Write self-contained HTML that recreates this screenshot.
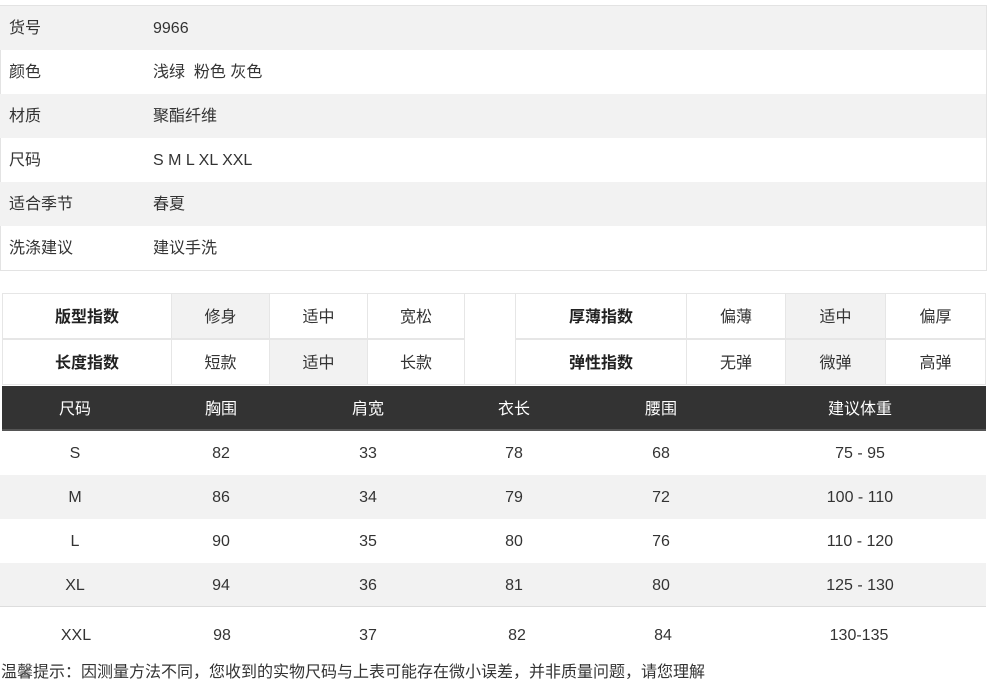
<!DOCTYPE html>
<html><head><meta charset="utf-8"><style>
*{margin:0;padding:0;box-sizing:border-box}
body{width:989px;height:685px;background:#fff;font-family:"Liberation Sans","Noto Sans CJK SC",sans-serif;font-size:16px;color:#333;position:relative;overflow:hidden}
.a{position:absolute}
.r{position:absolute;left:0;width:986px;height:44px;line-height:46px}
.g{background:#f2f2f2}
.c{position:absolute;text-align:center;border:1px solid #e6e6e6;height:46px;line-height:47px}
.b{font-weight:bold;color:#222}
.t{position:absolute;text-align:center;width:120px;margin-left:-60px}
</style></head><body>
<div class="a" style="left:0;top:5px;width:987px;height:266px;border:1px solid #e3e3e3"></div>
<div class="r g" style="top:6px"><span class="a" style="left:9px">货号</span><span class="a" style="left:153px">9966</span></div>
<div class="r" style="top:50px"><span class="a" style="left:9px">颜色</span><span class="a" style="left:153px">浅绿&nbsp; 粉色 灰色</span></div>
<div class="r g" style="top:94px"><span class="a" style="left:9px">材质</span><span class="a" style="left:153px">聚酯纤维</span></div>
<div class="r" style="top:138px"><span class="a" style="left:9px">尺码</span><span class="a" style="left:153px">S M L XL XXL</span></div>
<div class="r g" style="top:182px"><span class="a" style="left:9px">适合季节</span><span class="a" style="left:153px">春夏</span></div>
<div class="r" style="top:226px"><span class="a" style="left:9px">洗涤建议</span><span class="a" style="left:153px">建议手洗</span></div>

<div class="c b" style="left:2px;top:293px;width:170px">版型指数</div>
<div class="c g" style="left:171px;top:293px;width:99px">修身</div>
<div class="c" style="left:269px;top:293px;width:99px">适中</div>
<div class="c" style="left:367px;top:293px;width:98px">宽松</div>
<div class="c b" style="left:2px;top:339px;width:170px">长度指数</div>
<div class="c" style="left:171px;top:339px;width:99px">短款</div>
<div class="c g" style="left:269px;top:339px;width:99px">适中</div>
<div class="c" style="left:367px;top:339px;width:98px">长款</div>
<div class="c" style="left:464px;top:293px;width:52px;height:92px"></div>
<div class="c b" style="left:515px;top:293px;width:172px">厚薄指数</div>
<div class="c" style="left:686px;top:293px;width:100px">偏薄</div>
<div class="c g" style="left:785px;top:293px;width:101px">适中</div>
<div class="c" style="left:885px;top:293px;width:101px">偏厚</div>
<div class="c b" style="left:515px;top:339px;width:172px">弹性指数</div>
<div class="c" style="left:686px;top:339px;width:100px">无弹</div>
<div class="c g" style="left:785px;top:339px;width:101px">微弹</div>
<div class="c" style="left:885px;top:339px;width:101px">高弹</div>

<div class="r" style="top:386px;height:45px;line-height:47px;left:2px;width:984px;background:#333;color:#fff;border-bottom:2px solid #555">
<span class="t" style="left:73px">尺码</span><span class="t" style="left:219px">胸围</span><span class="t" style="left:366px">肩宽</span><span class="t" style="left:512px">衣长</span><span class="t" style="left:659px">腰围</span><span class="t" style="left:858px">建议体重</span></div>
<div class="r" style="top:431px"><span class="t" style="left:75px">S</span><span class="t" style="left:221px">82</span><span class="t" style="left:368px">33</span><span class="t" style="left:514px">78</span><span class="t" style="left:661px">68</span><span class="t" style="left:860px">75 - 95</span></div>
<div class="r g" style="top:475px"><span class="t" style="left:75px">M</span><span class="t" style="left:221px">86</span><span class="t" style="left:368px">34</span><span class="t" style="left:514px">79</span><span class="t" style="left:661px">72</span><span class="t" style="left:860px">100 - 110</span></div>
<div class="r" style="top:519px"><span class="t" style="left:75px">L</span><span class="t" style="left:221px">90</span><span class="t" style="left:368px">35</span><span class="t" style="left:514px">80</span><span class="t" style="left:661px">76</span><span class="t" style="left:860px">110 - 120</span></div>
<div class="r g" style="top:563px;border-bottom:1px solid #ddd"><span class="t" style="left:75px">XL</span><span class="t" style="left:221px">94</span><span class="t" style="left:368px">36</span><span class="t" style="left:514px">81</span><span class="t" style="left:661px">80</span><span class="t" style="left:860px">125 - 130</span></div>
<div class="r" style="top:613px"><span class="t" style="left:76px">XXL</span><span class="t" style="left:222px">98</span><span class="t" style="left:368px">37</span><span class="t" style="left:517px">82</span><span class="t" style="left:663px">84</span><span class="t" style="left:859px">130-135</span></div>
<div class="a" style="left:1px;top:661px;line-height:24px">温馨提示：因测量方法不同，您收到的实物尺码与上表可能存在微小误差，并非质量问题，请您理解</div>
</body></html>
